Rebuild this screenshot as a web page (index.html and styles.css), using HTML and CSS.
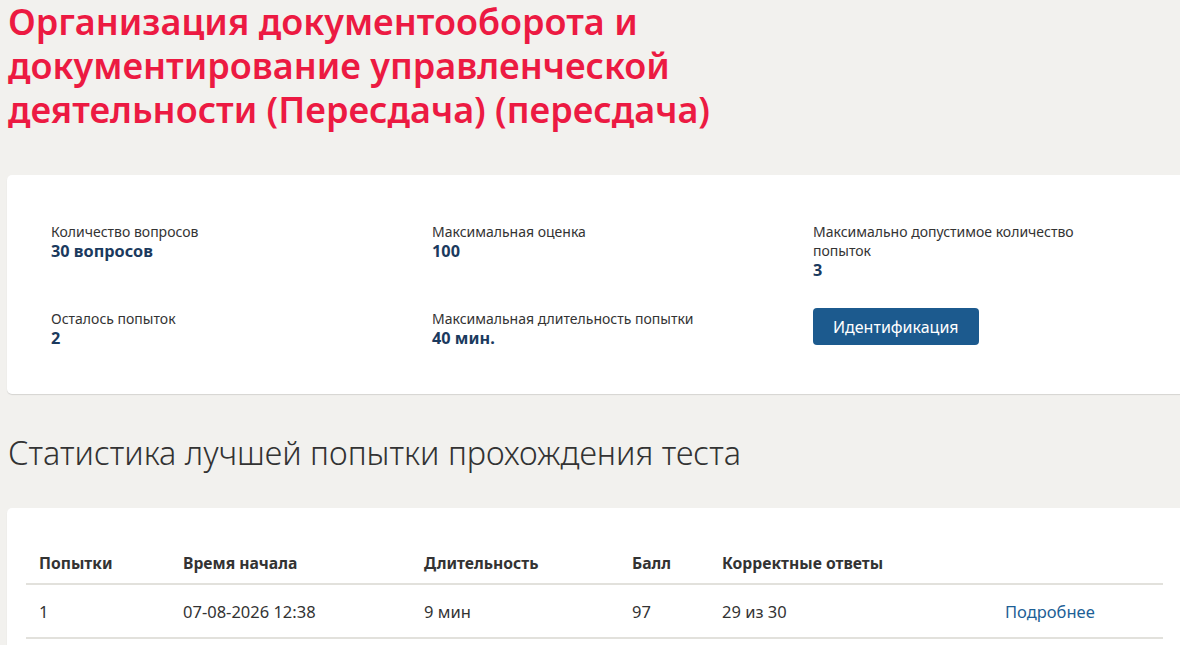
FILE: index.html
```html
<!DOCTYPE html>
<html lang="ru">
<head>
<meta charset="utf-8">
<title>Организация документооборота и документирование управленческой деятельности</title>
<link rel="stylesheet" href="styles.css">
</head>
<body>
<main class="page">
  <h1 class="test-title">Организация документооборота и документирование управленческой деятельности (Пересдача) (пересдача)</h1>

  <section class="card info-card">
    <div class="info-grid">
      <div class="info-item">
        <div class="info-label">Количество вопросов</div>
        <div class="info-value">30 вопросов</div>
      </div>
      <div class="info-item">
        <div class="info-label">Максимальная оценка</div>
        <div class="info-value">100</div>
      </div>
      <div class="info-item">
        <div class="info-label">Максимально допустимое количество попыток</div>
        <div class="info-value">3</div>
      </div>
      <div class="info-item">
        <div class="info-label">Осталось попыток</div>
        <div class="info-value">2</div>
      </div>
      <div class="info-item">
        <div class="info-label">Максимальная длительность попытки</div>
        <div class="info-value">40 мин.</div>
      </div>
      <div class="info-item">
        <button class="btn-primary" type="button">Идентификация</button>
      </div>
    </div>
  </section>

  <h2 class="section-title">Статистика лучшей попытки прохождения теста</h2>

  <section class="card stats-card">
    <table class="stats-table">
      <thead>
        <tr>
          <th class="col-try">Попытки</th>
          <th class="col-start">Время начала</th>
          <th class="col-dur">Длительность</th>
          <th class="col-score">Балл</th>
          <th class="col-correct">Корректные ответы</th>
          <th class="col-link"></th>
        </tr>
      </thead>
      <tbody>
        <tr>
          <td>1</td>
          <td>07-08-2026 12:38</td>
          <td>9 мин</td>
          <td>97</td>
          <td>29 из 30</td>
          <td><a class="more-link" href="#">Подробнее</a></td>
        </tr>
      </tbody>
    </table>
  </section>
</main>
</body>
</html>
```

FILE: styles.css
```css
html, body {
  margin: 0;
  padding: 0;
}

body {
  background: #f2f1ee;
  font-family: "Noto Sans", "Open Sans", sans-serif;
  color: #333;
  overflow: hidden;
}

.page {
  width: 1190px;
  padding: 0 0 0 7px;
}

.test-title {
  margin: 0 0 43px 1px;
  padding-top: 0;
  font-size: 36px;
  line-height: 44px;
  font-weight: 600;
  color: #ec1a42;
  max-width: 770px;
}

.card {
  background: #fff;
  border-radius: 5px;
  box-shadow: 0 1px 1px rgba(0, 0, 0, 0.12);
}

.info-card {
  padding: 47px 0 46px 44px;
}

.info-grid {
  display: grid;
  grid-template-columns: 381px 381px 300px;
  row-gap: 29px;
}

.info-label {
  font-size: 14px;
  line-height: 19px;
  color: #333;
}

.info-value {
  font-size: 16.3px;
  line-height: 20px;
  font-weight: 700;
  color: #1b3a5e;
}

.btn-primary {
  font-family: inherit;
  font-size: 16px;
  color: #fff;
  background: #1c5a8e;
  border: 0;
  border-radius: 4px;
  height: 37px;
  padding: 0 20px;
  margin-top: -1px;
}

.section-title {
  margin: 38px 0 36px 1px;
  font-size: 32.4px;
  line-height: 40px;
  font-weight: 300;
  color: #333;
}

.stats-card {
  padding: 34px 0 40px 19px;
}

.stats-table {
  border-collapse: collapse;
  width: 1137px;
  font-size: 16.5px;
}

.stats-table th,
.stats-table td {
  text-align: left;
  padding: 0 13px;
}

.stats-table th {
  font-size: 15.7px;
  font-weight: 700;
  color: #333;
  height: 41px;
  border-bottom: 2px solid #e2e1dc;
}

.stats-table td {
  height: 52px;
  border-bottom: 2px solid #e2e1dc;
}

.col-try { width: 118px; }
.col-start { width: 215px; }
.col-dur { width: 182px; }
.col-score { width: 64px; }
.col-correct { width: 257px; }

.more-link {
  color: #1d5f96;
  text-decoration: none;
}
```
